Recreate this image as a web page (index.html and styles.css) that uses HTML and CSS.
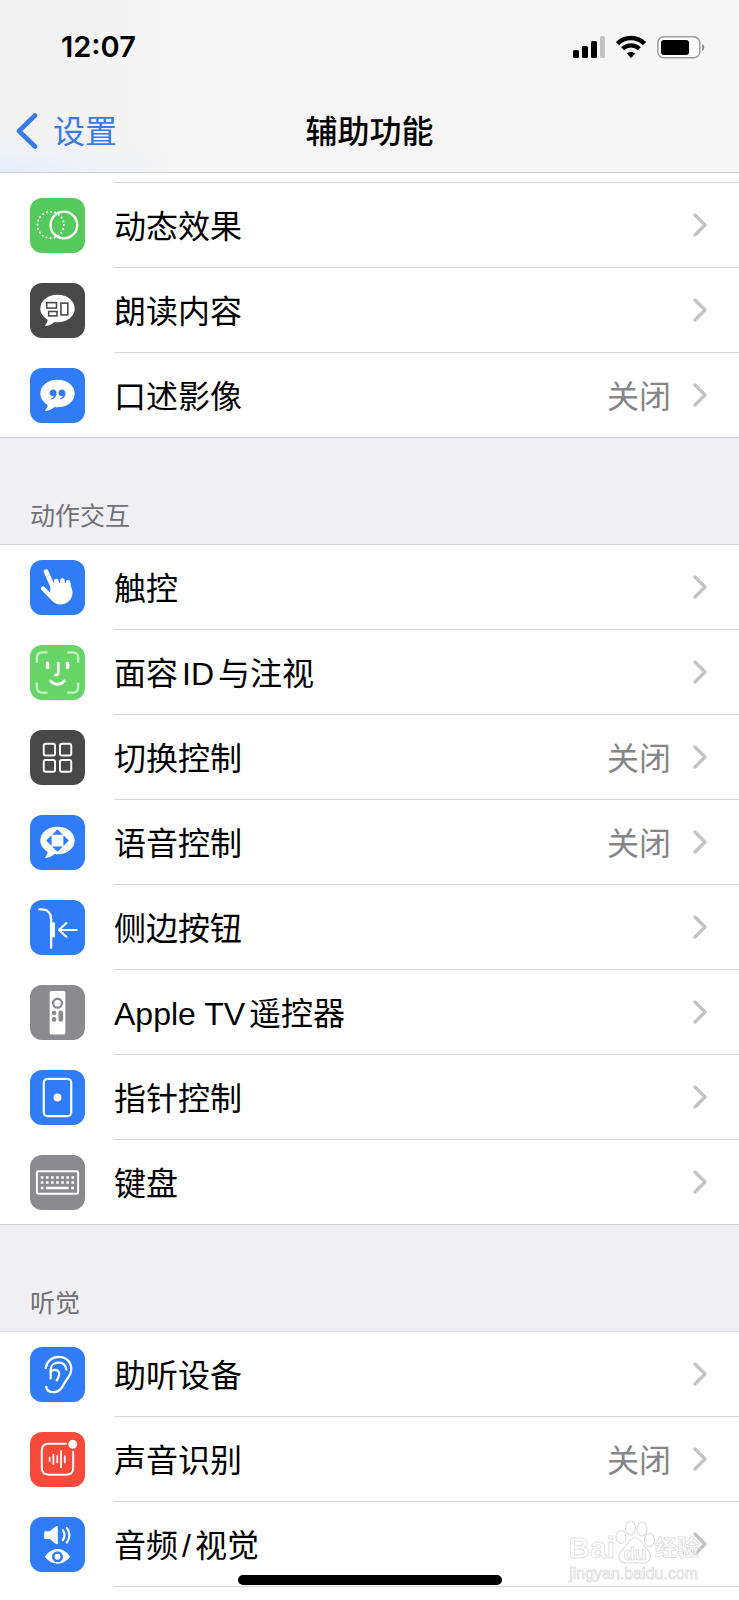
FILE: index.html
```html
<!DOCTYPE html>
<html lang="zh-CN">
<head>
    <meta charset="UTF-8">
    <meta name="viewport" content="width=device-width, initial-scale=1.0">
    <title>辅助功能</title>
    <link rel="stylesheet" href="styles.css">
</head>
<body>
    <!-- shared chevron -->
    <svg class="symbols" aria-hidden="true">
        <symbol id="chevron" viewBox="0 0 14 24">
            <path d="M2 2l10 10L2 22" fill="none" stroke="currentColor" stroke-width="3.4" stroke-linecap="round" stroke-linejoin="round"/>
        </symbol>
    </svg>

    <header class="header">
        <div class="status-bar">
            <span class="time">12:07</span>
            <div class="status-icons">
                <svg width="34" height="24" viewBox="0 0 34 24">
                    <rect x="1" y="15" width="6" height="8" rx="1.6"/>
                    <rect x="10" y="11" width="6" height="12" rx="1.6"/>
                    <rect x="19" y="6" width="6" height="17" rx="1.6"/>
                    <rect x="28" y="1" width="5" height="22" rx="1.6" fill="#c4c4c4"/>
                </svg>
                <svg width="32" height="24" viewBox="0 0 32 24">
                    <path d="M2.5 8.6C10 1.2 22 1.2 29.5 8.6" fill="none" stroke="#000" stroke-width="4.6"/>
                    <path d="M7.6 13.7c4.8-4.5 12-4.5 16.8 0" fill="none" stroke="#000" stroke-width="4.2"/>
                    <path d="M16 23l-4.3-4.4c2.5-2.2 6.1-2.2 8.6 0z"/>
                </svg>
                <svg width="50" height="24" viewBox="0 0 50 24">
                    <rect x="1.8" y="1.8" width="42" height="21" rx="6" fill="#fcfcfc" stroke="#9b9b9b" stroke-width="1.5"/>
                    <rect x="5" y="5" width="28" height="15" rx="3"/>
                    <path d="M46 9c3 1 3 6 0 7z" fill="#8d8d8d"/>
                </svg>
            </div>
        </div>
        <nav class="nav-bar">
            <a class="back" href="#">
                <svg width="22" height="36" viewBox="0 0 22 36">
                    <path d="M19 2.5L3 18 19 33.5" fill="none" stroke="currentColor" stroke-width="4.6" stroke-linecap="round" stroke-linejoin="round"/>
                </svg>
                <span>设置</span>
            </a>
            <h1>辅助功能</h1>
        </nav>
    </header>

    <main>
        <div class="previous-row"></div>
        <ul class="group">
            <li><a class="row" href="#">
                <svg class="icon green" viewBox="0 0 56 56">
                    <circle cx="21" cy="27.5" r="13.4" fill="none" stroke="#fff" stroke-width="2.2" stroke-linecap="round" stroke-dasharray="0 4.21"/>
                    <circle cx="34.5" cy="27.5" r="13.6" fill="none" stroke="#fff" stroke-width="2.4"/>
                </svg>
                <div class="row-body"><span class="label">动态效果</span><svg class="chevron"><use href="#chevron"/></svg></div>
            </a></li>
            <li><a class="row" href="#">
                <svg class="icon dark" viewBox="0 0 56 56">
                    <path d="M28 12c10 0 17.5 6 17.5 14S38 40 28 40c-1 0-2 0-3-.2-2.6 2.2-5.6 3.8-8.6 4-1 0-1.2-.9-.5-1.6 1.3-1.4 2-3 2-4.8C13.5 34.8 10.5 31 10.5 26 10.5 18 18 12 28 12z" fill="#fff"/>
                    <g fill="none" stroke="#484848" stroke-width="1.6">
                        <rect x="17" y="20" width="10" height="5.5"/>
                        <rect x="19" y="29" width="8.5" height="4.5"/>
                        <rect x="31.5" y="20.5" width="7" height="12"/>
                    </g>
                </svg>
                <div class="row-body"><span class="label">朗读内容</span><svg class="chevron"><use href="#chevron"/></svg></div>
            </a></li>
            <li><a class="row" href="#">
                <svg class="icon blue" viewBox="0 0 56 56">
                    <path d="M28 12c10 0 17.5 6 17.5 14S38 40 28 40c-1 0-2 0-3-.2-2.6 2.2-5.6 3.8-8.6 4-1 0-1.2-.9-.5-1.6 1.3-1.4 2-3 2-4.8C13.5 34.8 10.5 31 10.5 26 10.5 18 18 12 28 12z" fill="#fff"/>
                    <path d="M23.5 22c2.2 0 3.6 1.6 3.6 3.9 0 2.9-2 5.2-4.8 6-.8.2-1.1-.7-.4-1 1.2-.6 2.2-1.4 2.6-2.4-2.6.7-4.6-.9-4.6-3 0-2 1.600-3.5 3.600-3.5zM32.5 22c2.2 0 3.6 1.6 3.6 3.9 0 2.9-2 5.2-4.8 6-.8.2-1.1-.7-.4-1 1.2-.6 2.2-1.4 2.6-2.4-2.6.7-4.6-.9-4.6-3 0-2 1.6-3.5 3.6-3.5z" fill="#2f7cf6"/>
                </svg>
                <div class="row-body"><span class="label">口述影像</span><span class="value">关闭</span><svg class="chevron"><use href="#chevron"/></svg></div>
            </a></li>
        </ul>

        <h2>动作交互</h2>
        <ul class="group">
            <li><a class="row" href="#">
                <svg class="icon blue" viewBox="0 0 56 56">
                    <g fill="none" stroke="#fff" stroke-linecap="round">
                        <path d="M16.3 11.8L25 31M26.8 21.500L29 32M33 21l1.500 11M38.800 22.800l1 9" stroke-width="4.800"/>
                        <path d="M13.300 29L23 39" stroke-width="4.400"/>
                    </g>
                    <path d="M21 24l6-1 6-1 6 1 2.500 3.500c1.500 3.500 2.200 6.500 1.500 9.500-1.200 5.500-6 9.300-11.800 9.300-4 0-7.200-1.500-9.700-4.800l-1-7.500z" fill="#fff"/>
                    <path d="M29.800 20.500l.6 2.800M35.900 20.800l.4 2.600" stroke="#2f7cf6" stroke-width="1"/>
                </svg>
                <div class="row-body"><span class="label">触控</span><svg class="chevron"><use href="#chevron"/></svg></div>
            </a></li>
            <li><a class="row" href="#">
                <svg class="icon light-green" viewBox="0 0 56 56">
                    <g fill="none" stroke-linecap="round">
                        <path d="M7 17v-4c0-3.5 2-5.5 5.5-5.5H17M39 7.5h4.5c3.5 0 5.5 2 5.5 5.5v4M49 39v4c0 3.5-2 5.5-5.5 5.5H39M17 48.5h-4.5C9 48.5 7 46.5 7 43v-4" stroke="#c2f2c2" stroke-width="2.4"/>
                        <path d="M17.8 18.5v4.5M38.3 18.5v4.5" stroke="#fff" stroke-width="3.6"/>
                        <path d="M28.8 18.5v9.5c0 1.8-1 2.7-3 2.6" stroke="#fff" stroke-width="2.7"/>
                        <path d="M21 36.5c4 4.7 10 4.7 14 0" stroke="#fff" stroke-width="2.8"/>
                    </g>
                </svg>
                <div class="row-body"><span class="label">面容ID与注视</span><svg class="chevron"><use href="#chevron"/></svg></div>
            </a></li>
            <li><a class="row" href="#">
                <svg class="icon dark" viewBox="0 0 56 56">
                    <g fill="none" stroke="#fff" stroke-width="2">
                        <rect x="14" y="14" width="11.5" height="12" rx="2"/>
                        <rect x="30.5" y="14" width="11.5" height="12" rx="2"/>
                        <rect x="14" y="30.5" width="11.5" height="12" rx="2"/>
                        <rect x="30.5" y="30.5" width="11.5" height="12" rx="2"/>
                    </g>
                </svg>
                <div class="row-body"><span class="label">切换控制</span><span class="value">关闭</span><svg class="chevron"><use href="#chevron"/></svg></div>
            </a></li>
            <li><a class="row" href="#">
                <svg class="icon blue" viewBox="0 0 56 56">
                    <path d="M28 12c10 0 17.5 6 17.5 14S38 40 28 40c-1 0-2 0-3-.2-2.6 2.2-5.6 3.8-8.6 4-1 0-1.2-.9-.5-1.6 1.3-1.4 2-3 2-4.8C13.5 34.8 10.5 31 10.5 26 10.5 18 18 12 28 12z" fill="#fff"/>
                    <path d="M28 14.5l5.5 5.5h-11zM28 37.5l5.5-5.5h-11zM16.5 26l5.5-5.5v11zM39.5 26l-5.5-5.5v11z" fill="#2f7cf6"/>
                </svg>
                <div class="row-body"><span class="label">语音控制</span><span class="value">关闭</span><svg class="chevron"><use href="#chevron"/></svg></div>
            </a></li>
            <li><a class="row" href="#">
                <svg class="icon blue" viewBox="0 0 56 56">
                    <g fill="none" stroke="#fff" stroke-linecap="round" stroke-linejoin="round">
                        <path d="M9.5 9.5H12c6 0 9.5 4 9.5 10V48.5" stroke-width="2.4"/>
                        <path d="M23.7 23v15" stroke-width="3.4" stroke-linecap="butt"/>
                        <path d="M47.5 30.5H30M37 23.5l-7.5 7 7.5 7" stroke-width="2.2"/>
                    </g>
                </svg>
                <div class="row-body"><span class="label">侧边按钮</span><svg class="chevron"><use href="#chevron"/></svg></div>
            </a></li>
            <li><a class="row" href="#">
                <svg class="icon gray" viewBox="0 0 56 56">
                    <rect x="20" y="6" width="16" height="44.5" rx="2" fill="#fff"/>
                    <circle cx="28" cy="18.5" r="4.5" fill="none" stroke="#8b8a8f" stroke-width="2.4"/>
                    <g fill="#8b8a8f">
                        <circle cx="24.5" cy="28.5" r="2.4"/>
                        <circle cx="24.5" cy="35" r="2.4"/>
                        <rect x="29" y="26" width="4.8" height="11.5" rx="2.4"/>
                    </g>
                </svg>
                <div class="row-body"><span class="label">Apple TV遥控器</span><svg class="chevron"><use href="#chevron"/></svg></div>
            </a></li>
            <li><a class="row" href="#">
                <svg class="icon blue" viewBox="0 0 56 56">
                    <rect x="14" y="9" width="28" height="38" rx="4" fill="none" stroke="#fff" stroke-width="2.2"/>
                    <circle cx="28" cy="28" r="4" fill="#fff"/>
                </svg>
                <div class="row-body"><span class="label">指针控制</span><svg class="chevron"><use href="#chevron"/></svg></div>
            </a></li>
            <li><a class="row" href="#">
                <svg class="icon gray" viewBox="0 0 56 56">
                    <rect x="7" y="16.5" width="42" height="23" rx="1.5" fill="none" stroke="#fff" stroke-width="2"/>
                    <path d="M11 23h34M11 28h34" fill="none" stroke="#fff" stroke-width="2.6" stroke-dasharray="2.7 2.5"/>
                    <path d="M11 33.5h2.7M16.3 33.5h23M42 33.5h2.7" stroke="#fff" stroke-width="2.6"/>
                </svg>
                <div class="row-body"><span class="label">键盘</span><svg class="chevron"><use href="#chevron"/></svg></div>
            </a></li>
        </ul>

        <h2>听觉</h2>
        <ul class="group">
            <li><a class="row" href="#">
                <svg class="icon blue" viewBox="0 0 56 56">
                    <g fill="none" stroke="#fff" stroke-width="2.3" stroke-linecap="round" stroke-linejoin="round">
                        <path d="M16 21.5C17 14.5 22.5 10 29.5 10 37 10 42 15.5 42 22.5c0 7-4 9-6.5 13.5-2.2 4-4.5 10-12 10-4 0-6.500-2-7-5.5"/>
                        <path d="M21 32V23.5c0-4.5 3.3-7.5 8-7.5s7.5 2.5 8 7"/>
                        <path d="M21.5 25c1.2-2 6.5-2.5 8 .7 1.1 2.6-.5 5.2-2.3 8.3"/>
                    </g>
                </svg>
                <div class="row-body"><span class="label">助听设备</span><svg class="chevron"><use href="#chevron"/></svg></div>
            </a></li>
            <li><a class="row" href="#">
                <svg class="icon red" viewBox="0 0 56 56">
                    <g fill="none" stroke="#fff" stroke-linecap="round">
                        <path d="M36.5 12H19c-4.500 0-7 2.5-7 7v17.5c0 4.5 2.5 7 7 7h18c4.5 0 7-2.5 7-7V20" stroke-width="2"/>
                        <path d="M20 26v3.5M23.8 23v9.5M27.8 24.5v6.5M31.6 19.5v16.5M35.4 24.5v6.5" stroke-width="1.8"/>
                    </g>
                    <circle cx="43.5" cy="12.5" r="4.5" fill="#fff"/>
                </svg>
                <div class="row-body"><span class="label">声音识别</span><span class="value">关闭</span><svg class="chevron"><use href="#chevron"/></svg></div>
            </a></li>
            <li><a class="row" href="#">
                <svg class="icon blue" viewBox="0 0 56 56">
                    <path d="M15.5 14.5h4.5l6.5-5c.8-.6 1.8-.2 1.8.8v16.4c0 1-1 1.4-1.8.8l-6.5-5h-4.5c-.6 0-1-.4-1-1v-6c0-.6.4-1 1-1z" fill="#fff"/>
                    <path d="M33.5 13.5c2 3 2 7 0 10M37.5 11c3.5 4.5 3.5 10.5 0 15" fill="none" stroke="#fff" stroke-width="2.2" stroke-linecap="round"/>
                    <path d="M15 40.5c7.5-10.5 18.5-10.5 26 0-7.5 9.500-18.5 9.5-26 0z" fill="#fff"/>
                    <circle cx="28" cy="40.5" r="4.3" fill="none" stroke="#2f7cf6" stroke-width="2.6"/>
                </svg>
                <div class="row-body"><span class="label">音频<span class="slash">/</span>视觉</span><svg class="chevron"><use href="#chevron"/></svg></div>
            </a></li>
        </ul>
    </main>

    <div class="watermark">
        <div class="watermark-logo">
            <span>Bai</span>
            <span class="paw">
                <svg width="40" height="44" viewBox="0 0 40 44">
                    <g fill="#fff" stroke="#d6d6d6" stroke-width="1.2">
                        <ellipse cx="6" cy="17" rx="5" ry="6.5"/>
                        <ellipse cx="15.5" cy="8" rx="5" ry="7"/>
                        <ellipse cx="27" cy="9" rx="5" ry="7"/>
                        <ellipse cx="34.5" cy="20" rx="5" ry="6.5"/>
                        <path d="M20 18c6 0 7 6 11 10 3.5 3.5 5.5 7 4 11-1.5 4-6 4.5-10 4H14c-5 .5-9-.5-10-5-1-4 2-7 5-10 4-4 5-10 11-10z"/>
                    </g>
                </svg>
                <span class="du">du</span>
            </span>
            <span>经验</span>
        </div>
        <div class="watermark-url">jingyan.baidu.com</div>
    </div>
    <div class="home-indicator"></div>
</body>
</html>
```

FILE: styles.css
```css
* {
    box-sizing: border-box;
}
body {
    margin: 0;
    min-height: 100vh;
    background-color: #fff;
    color: #000;
    font-family: "Liberation Sans", "Noto Sans CJK SC", sans-serif;
    font-size: 32px;
    line-height: 40px;
    text-autospace: normal;
}
ul {
    list-style: none;
    margin: 0;
    padding: 0;
}
a {
    color: inherit;
    text-decoration: none;
}
svg {
    display: block;
    flex-shrink: 0;
}
.symbols {
    display: none;
}

/* Header */
.header {
    background: radial-gradient(ellipse at 0% 100%, #e4eefc 0, rgba(236, 240, 248, 0.6) 90px, rgba(246, 246, 246, 0) 180px), linear-gradient(90deg, #f1f1f2, #f6f6f6 180px);
    border-bottom: 1px solid #cfd0d2;
}
.status-bar {
    display: flex;
    justify-content: space-between;
    align-items: center;
    height: 94px;
    padding: 0 33px 0 61px;
}
.time {
    font-family: Inter, sans-serif;
    font-size: 29px;
    font-weight: 600;
}
.status-icons {
    display: flex;
    gap: 9px;
}
.nav-bar {
    display: grid;
    grid-template-columns: 1fr auto 1fr;
    align-items: center;
    height: 78px;
    padding: 0 16px 4px;
}
.back {
    display: flex;
    align-items: center;
    gap: 15px;
    color: #377ce4;
}
.back span,
h1 {
    padding-top: 2px;
}
h1 {
    margin: 0;
    font-size: 32px;
    font-weight: 500;
}

/* Settings list */
.previous-row {
    height: 10px;
    margin-left: 114px;
    border-bottom: 1px solid #d2d2d4;
}
h2 {
    height: 107px;
    margin: 0;
    padding: 62px 30px 0;
    background-color: #efeff4;
    border-bottom: 1px solid #d6d6da;
    color: #707075;
    font-size: 25px;
    font-weight: 400;
    line-height: 32px;
}
.row {
    display: flex;
    align-items: center;
    height: 85px;
    padding-left: 30px;
}
.row-body {
    display: flex;
    align-items: center;
    flex: 1;
    height: 85px;
    margin-left: 29px;
    padding-right: 32px;
    border-bottom: 1px solid #d4d4d6;
}
.group:not(:last-child) li:last-child .row {
    border-bottom: 1px solid #cbcbcf;
}
.group:not(:last-child) li:last-child .row-body {
    height: 84px;
    border-bottom: none;
}
.label {
    flex: 1;
    padding-top: 4px;
}
.slash {
    margin: 0 4px;
}
.value {
    margin-right: 22px;
    padding-top: 4px;
    color: #868689;
}
.chevron {
    width: 14px;
    height: 24px;
    color: #c4c4c6;
}
.icon {
    width: 55px;
    height: 55px;
    border-radius: 12px;
}
.green {
    background-color: #56c95c;
}
.light-green {
    background-color: #67d467;
}
.dark {
    background-color: #484848;
}
.blue {
    background-color: #2f7cf6;
}
.gray {
    background-color: #8b8a8f;
}
.red {
    background-color: #f84a3b;
}

/* Overlays */
.home-indicator {
    position: fixed;
    bottom: 15px;
    left: 50%;
    width: 264px;
    height: 10px;
    margin-left: -132px;
    border-radius: 5px;
    background-color: #000;
}
.watermark {
    position: fixed;
    right: 40px;
    bottom: 16px;
    color: #fff;
    -webkit-text-stroke: 1px #dadada;
    opacity: 0.8;
}
.watermark-logo {
    display: flex;
    align-items: flex-end;
    font-size: 30px;
    font-weight: 700;
    line-height: 32px;
}
.watermark-logo > span:last-child {
    font-size: 22px;
}
.paw {
    position: relative;
}
.du {
    position: absolute;
    left: 0;
    right: 0;
    bottom: 0;
    font-size: 19px;
    line-height: 20px;
    text-align: center;
}
.watermark-url {
    font-size: 16px;
    line-height: 20px;
    text-align: center;
}
```
